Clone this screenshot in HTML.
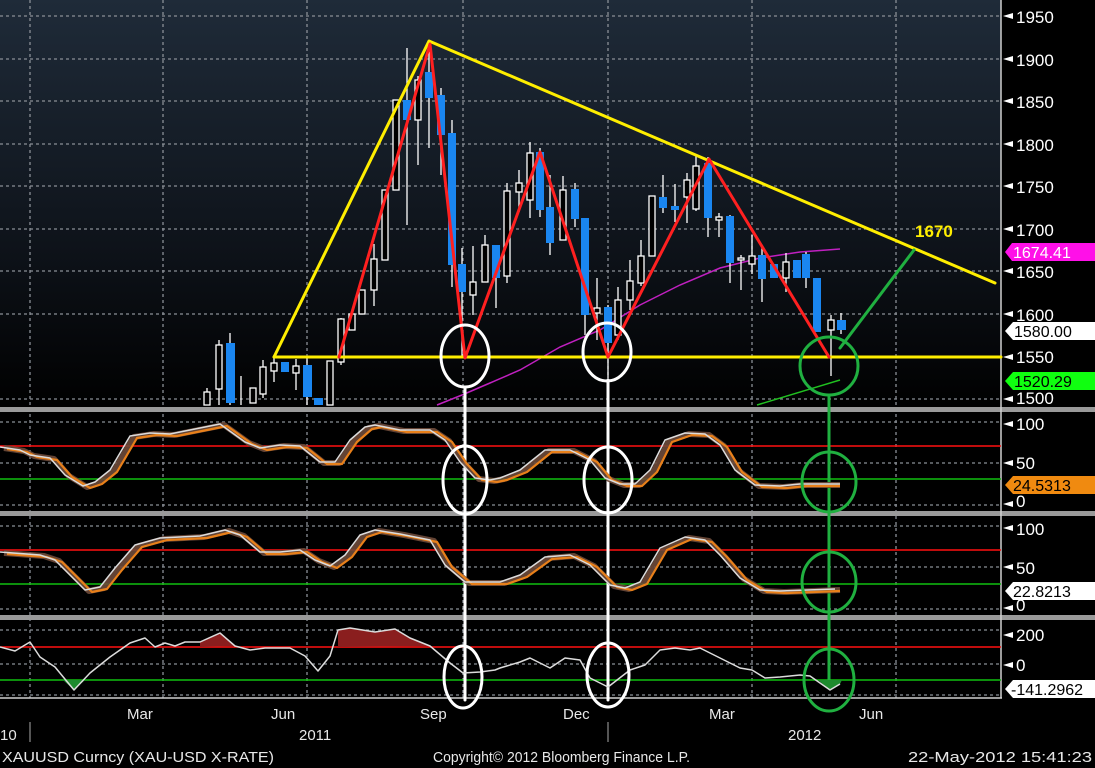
<!DOCTYPE html>
<html><head><meta charset="utf-8"><style>
html,body{margin:0;padding:0;background:#000;width:1095px;height:768px;overflow:hidden}
svg{display:block}
text{font-family:"Liberation Sans",sans-serif}
</style></head><body>
<svg width="1095" height="768" viewBox="0 0 1095 768" xmlns="http://www.w3.org/2000/svg">
<defs>
<linearGradient id="bg" x1="0" y1="0" x2="0" y2="1">
<stop offset="0" stop-color="#1f2b39"/><stop offset="0.6" stop-color="#0e131a"/><stop offset="1" stop-color="#000"/>
</linearGradient>
</defs>
<rect width="1095" height="768" fill="#000"/>
<rect x="0" y="0" width="1001" height="409" fill="url(#bg)"/>
<g stroke="#8a8f96" stroke-width="1.3" stroke-dasharray="3,3">
<line x1="0" y1="16" x2="1001" y2="16"/><line x1="0" y1="59" x2="1001" y2="59"/><line x1="0" y1="101" x2="1001" y2="101"/>
<line x1="0" y1="144" x2="1001" y2="144"/><line x1="0" y1="186" x2="1001" y2="186"/><line x1="0" y1="229" x2="1001" y2="229"/>
<line x1="0" y1="271" x2="1001" y2="271"/><line x1="0" y1="314" x2="1001" y2="314"/><line x1="0" y1="399" x2="1001" y2="399"/>
<line x1="0" y1="422" x2="1001" y2="422"/><line x1="0" y1="463" x2="1001" y2="463"/><line x1="0" y1="505" x2="1001" y2="505"/>
<line x1="0" y1="526" x2="1001" y2="526"/><line x1="0" y1="567" x2="1001" y2="567"/><line x1="0" y1="609" x2="1001" y2="609"/>
<line x1="0" y1="630" x2="1001" y2="630"/><line x1="0" y1="664" x2="1001" y2="664"/><line x1="0" y1="695" x2="1001" y2="695"/>
<line x1="30" y1="0" x2="30" y2="698"/><line x1="163" y1="0" x2="163" y2="698"/><line x1="307" y1="0" x2="307" y2="698"/>
<line x1="463" y1="0" x2="463" y2="698"/><line x1="608" y1="0" x2="608" y2="698"/><line x1="752" y1="0" x2="752" y2="698"/><line x1="896" y1="0" x2="896" y2="698"/>
</g>
<rect x="0" y="407" width="1095" height="5" fill="#9a9a9a"/>
<rect x="0" y="511" width="1095" height="5" fill="#9a9a9a"/>
<rect x="0" y="615" width="1095" height="5" fill="#9a9a9a"/>
<line x1="0" y1="698" x2="1002" y2="698" stroke="#cfcfcf" stroke-width="1.5"/>
<line x1="1001" y1="0" x2="1001" y2="698" stroke="#cfcfcf" stroke-width="1.5"/>
<g stroke-width="1.5">
<line x1="0" y1="446" x2="1001" y2="446" stroke="#ff1010"/><line x1="0" y1="479" x2="1001" y2="479" stroke="#10c010"/>
<line x1="0" y1="550" x2="1001" y2="550" stroke="#ff1010"/><line x1="0" y1="584" x2="1001" y2="584" stroke="#10c010"/>
<line x1="0" y1="647" x2="1001" y2="647" stroke="#ff1010"/><line x1="0" y1="680" x2="1001" y2="680" stroke="#10c010"/>
</g>
<polyline fill="none" stroke="#c020c0" stroke-width="1.5" points="437,405 462,395 490,383 520,370 560,347 600,330 640,305 680,285 720,268 760,258 800,252 840,249"/>
<line x1="757" y1="405" x2="840" y2="380" stroke="#20c020" stroke-width="1.5"/>
<g stroke="#fff" stroke-width="1.3">
<line x1="207" y1="388" x2="207" y2="405"/><line x1="219" y1="340" x2="219" y2="405"/><line x1="230" y1="333" x2="230" y2="405"/>
<line x1="241" y1="376" x2="241" y2="405"/><line x1="263" y1="360" x2="263" y2="398"/><line x1="274" y1="355" x2="274" y2="382"/>
<line x1="296" y1="359" x2="296" y2="390"/><line x1="307" y1="358" x2="307" y2="405"/><line x1="341" y1="318" x2="341" y2="365"/>
<line x1="374" y1="244" x2="374" y2="306"/><line x1="407" y1="48" x2="407" y2="225"/><line x1="418" y1="76" x2="418" y2="165"/>
<line x1="429" y1="40" x2="429" y2="148"/><line x1="441" y1="88" x2="441" y2="175"/><line x1="452" y1="120" x2="452" y2="287"/>
<line x1="462" y1="248" x2="462" y2="358"/><line x1="473" y1="246" x2="473" y2="315"/><line x1="485" y1="235" x2="485" y2="282"/>
<line x1="496" y1="245" x2="496" y2="308"/><line x1="507" y1="183" x2="507" y2="283"/><line x1="519" y1="170" x2="519" y2="212"/>
<line x1="530" y1="142" x2="530" y2="218"/><line x1="540" y1="148" x2="540" y2="217"/><line x1="550" y1="175" x2="550" y2="255"/>
<line x1="563" y1="176" x2="563" y2="240"/><line x1="575" y1="183" x2="575" y2="227"/><line x1="585" y1="218" x2="585" y2="335"/>
<line x1="597" y1="278" x2="597" y2="340"/><line x1="608" y1="305" x2="608" y2="378"/><line x1="618" y1="287" x2="618" y2="340"/>
<line x1="630" y1="260" x2="630" y2="310"/><line x1="641" y1="240" x2="641" y2="286"/><line x1="663" y1="175" x2="663" y2="213"/>
<line x1="675" y1="184" x2="675" y2="222"/><line x1="687" y1="173" x2="687" y2="223"/><line x1="696" y1="156" x2="696" y2="211"/>
<line x1="708" y1="157" x2="708" y2="237"/><line x1="719" y1="213" x2="719" y2="237"/><line x1="730" y1="215" x2="730" y2="283"/>
<line x1="741" y1="255" x2="741" y2="290"/><line x1="752" y1="235" x2="752" y2="274"/><line x1="762" y1="245" x2="762" y2="302"/>
<line x1="786" y1="253" x2="786" y2="292"/><line x1="806" y1="252" x2="806" y2="288"/><line x1="831" y1="315" x2="831" y2="376"/>
<line x1="841" y1="313" x2="841" y2="334"/>
</g>
<g fill="#000" stroke="#fff" stroke-width="1.3">
<rect x="204" y="392" width="6" height="13"/><rect x="216" y="345" width="6" height="44"/><rect x="250" y="388" width="6" height="15"/>
<rect x="260" y="367" width="6" height="27"/><rect x="271" y="363" width="6" height="8"/><rect x="293" y="366" width="6" height="7"/>
<rect x="327" y="361" width="6" height="44"/><rect x="338" y="319" width="6" height="43"/><rect x="349" y="314" width="6" height="16"/>
<rect x="359" y="290" width="6" height="24"/><rect x="371" y="259" width="6" height="31"/><rect x="382" y="190" width="6" height="70"/>
<rect x="393" y="100" width="6" height="90"/><rect x="415" y="80" width="6" height="40"/><rect x="470" y="282" width="6" height="13"/>
<rect x="482" y="245" width="6" height="37"/><rect x="504" y="191" width="6" height="85"/><rect x="516" y="183" width="6" height="9"/>
<rect x="527" y="153" width="6" height="47"/><rect x="560" y="190" width="6" height="50"/><rect x="594" y="308" width="6" height="5"/>
<rect x="615" y="300" width="6" height="35"/><rect x="627" y="281" width="6" height="19"/><rect x="638" y="256" width="6" height="27"/>
<rect x="649" y="196" width="6" height="60"/><rect x="684" y="180" width="6" height="17"/><rect x="693" y="166" width="6" height="43"/>
<rect x="716" y="217" width="6" height="3"/><rect x="738" y="258" width="6" height="2"/><rect x="749" y="256" width="6" height="8"/>
<rect x="783" y="262" width="6" height="16"/><rect x="828" y="320" width="6" height="10"/>
</g>
<g fill="#1a86f0">
<rect x="226" y="343" width="9" height="60"/><rect x="281" y="362" width="8" height="10"/><rect x="303" y="365" width="9" height="32"/>
<rect x="314" y="398" width="9" height="7"/><rect x="403" y="100" width="8" height="20"/><rect x="425" y="72" width="8" height="26"/>
<rect x="437" y="95" width="8" height="40"/><rect x="448" y="133" width="8" height="132"/><rect x="458" y="264" width="8" height="28"/>
<rect x="492" y="245" width="8" height="33"/><rect x="536" y="152" width="8" height="58"/><rect x="546" y="207" width="8" height="36"/>
<rect x="571" y="189" width="8" height="30"/><rect x="581" y="218" width="8" height="97"/><rect x="604" y="307" width="8" height="36"/>
<rect x="659" y="197" width="8" height="11"/><rect x="671" y="206" width="8" height="4"/><rect x="704" y="163" width="8" height="55"/>
<rect x="726" y="216" width="8" height="47"/><rect x="758" y="255" width="8" height="24"/><rect x="770" y="264" width="8" height="14"/>
<rect x="793" y="260" width="8" height="18"/><rect x="802" y="254" width="8" height="24"/><rect x="813" y="278" width="8" height="54"/>
<rect x="837" y="320" width="9" height="10"/>
</g>
<g fill="none" stroke-linecap="round" stroke-linejoin="round">
<polyline points="274,357 429,41 995,283" stroke="#ffee00" stroke-width="3"/>
<line x1="274" y1="357" x2="1001" y2="357" stroke="#ffee00" stroke-width="3"/>
<polyline points="339,357 430,44 465,358 540,152 608,357 709,159 829,357" stroke="#ff2020" stroke-width="3"/>
<line x1="840" y1="348" x2="914" y2="250" stroke="#20b040" stroke-width="3"/>
<line x1="465" y1="387" x2="465" y2="700" stroke="#fff" stroke-width="3"/>
<line x1="608" y1="380" x2="608" y2="700" stroke="#fff" stroke-width="3"/>
<line x1="829" y1="395" x2="829" y2="680" stroke="#20b040" stroke-width="3"/>
</g>
<text x="915" y="237" fill="#ffee00" font-size="17" font-weight="bold">1670</text>
<g fill="none" stroke-linejoin="round">
<g transform="translate(4,1)" stroke="#6e4a3a" stroke-width="6" opacity="0.9">
<polyline points="0,447 20,450 30,455 50,458 65,475 83,486 95,482 110,470 130,436 150,433 170,434 200,428 220,424 245,442 260,448 280,445 300,446 320,462 335,462 350,440 365,427 375,425 400,430 430,430 445,440 460,462 475,478 490,480 500,478 520,470 545,450 570,450 590,460 605,478 620,484 635,484 650,470 665,440 685,433 705,434 720,445 735,470 755,485 780,486 800,484 836,484"/>
<polyline points="0,552 40,555 55,560 70,575 85,590 100,587 115,568 135,545 160,538 200,536 225,530 240,535 260,552 280,552 300,550 315,560 330,566 345,555 360,535 375,530 400,534 430,540 445,565 465,582 490,582 500,582 520,575 545,557 570,555 590,565 610,585 625,588 640,582 660,548 685,537 705,540 720,555 740,578 760,590 780,591 836,589"/>
</g>
<g transform="translate(7,2)" stroke="#e8801a" stroke-width="2.2">
<polyline points="0,447 20,450 30,455 50,458 65,475 83,486 95,482 110,470 130,436 150,433 170,434 200,428 220,424 245,442 260,448 280,445 300,446 320,462 335,462 350,440 365,427 375,425 400,430 430,430 445,440 460,462 475,478 490,480 500,478 520,470 545,450 570,450 590,460 605,478 620,484 635,484 650,470 665,440 685,433 705,434 720,445 735,470 755,485 780,486 800,484 833,484"/>
<polyline points="0,552 40,555 55,560 70,575 85,590 100,587 115,568 135,545 160,538 200,536 225,530 240,535 260,552 280,552 300,550 315,560 330,566 345,555 360,535 375,530 400,534 430,540 445,565 465,582 490,582 500,582 520,575 545,557 570,555 590,565 610,585 625,588 640,582 660,548 685,537 705,540 720,555 740,578 760,590 780,591 833,589"/>
</g>
<g stroke="#dcdcdc" stroke-width="1.5">
<polyline points="0,447 20,450 30,455 50,458 65,475 83,486 95,482 110,470 130,436 150,433 170,434 200,428 220,424 245,442 260,448 280,445 300,446 320,462 335,462 350,440 365,427 375,425 400,430 430,430 445,440 460,462 475,478 490,480 500,478 520,470 545,450 570,450 590,460 605,478 620,484 635,484 650,470 665,440 685,433 705,434 720,445 735,470 755,485 780,486 800,484 840,484"/>
<polyline points="0,552 40,555 55,560 70,575 85,590 100,587 115,568 135,545 160,538 200,536 225,530 240,535 260,552 280,552 300,550 315,560 330,566 345,555 360,535 375,530 400,534 430,540 445,565 465,582 490,582 500,582 520,575 545,557 570,555 590,565 610,585 625,588 640,582 660,548 685,537 705,540 720,555 740,578 760,590 780,591 835,589"/>
</g>
<polygon points="338,647 338,630 350,628 375,632 395,629 410,638 430,646" fill="#8a1e1e" stroke="none"/>
<polygon points="200,647 200,642 220,633 235,646" fill="#8a1e1e" stroke="none"/>
<polygon points="63,680 74,690 85,680" fill="#1e8a2e" stroke="none"/>
<polygon points="818,680 830,690 840,684 842,680" fill="#1e8a2e" stroke="none"/>
<polyline stroke="#dcdcdc" stroke-width="1.5" points="0,647 15,651 30,642 40,657 55,667 74,690 90,673 110,657 130,643 145,638 155,647 165,643 175,646 185,642 200,642 220,633 235,646 250,650 265,648 290,648 305,656 318,671 330,656 338,630 350,628 375,632 395,629 410,638 430,646 450,663 463,673 480,672 495,670 500,668 520,662 530,658 550,668 565,658 580,660 590,678 608,687 630,670 645,665 660,650 675,648 690,650 700,648 720,658 740,668 752,670 765,678 780,677 800,675 810,676 820,683 830,690 840,684"/>
</g>
<g fill="none" stroke-width="3">
<ellipse cx="465" cy="356" rx="24" ry="31" stroke="#fff"/>
<ellipse cx="607" cy="352" rx="24" ry="29" stroke="#fff"/>
<ellipse cx="829" cy="366" rx="29" ry="29" stroke="#20b040"/>
<ellipse cx="465" cy="480" rx="22" ry="34" stroke="#fff"/>
<ellipse cx="608" cy="480" rx="24" ry="33" stroke="#fff"/>
<ellipse cx="829" cy="482" rx="27" ry="30" stroke="#20b040"/>
<ellipse cx="829" cy="582" rx="27" ry="30" stroke="#20b040"/>
<ellipse cx="463" cy="677" rx="19" ry="31" stroke="#fff"/>
<ellipse cx="608" cy="675" rx="21" ry="32" stroke="#fff"/>
<ellipse cx="829" cy="680" rx="25" ry="31" stroke="#20b040"/>
</g>
<g fill="#fff" font-size="17" stroke="none">
<text x="1016" y="23">1950</text><text x="1016" y="66">1900</text><text x="1016" y="108">1850</text>
<text x="1016" y="151">1800</text><text x="1016" y="193">1750</text><text x="1016" y="236">1700</text>
<text x="1016" y="278">1650</text><text x="1016" y="321">1600</text><text x="1016" y="363">1550</text>
<text x="1016" y="404">1500</text>
<text x="1016" y="430">100</text><text x="1016" y="469">50</text><text x="1016" y="507">0</text>
<text x="1016" y="535">100</text><text x="1016" y="574">50</text><text x="1016" y="611">0</text>
<text x="1016" y="641">200</text><text x="1016" y="671">0</text>
</g>
<g fill="#fff">
<polygon points="1003,16 1013,13 1013,19"/><polygon points="1003,59 1013,56 1013,62"/><polygon points="1003,101 1013,98 1013,104"/>
<polygon points="1003,144 1013,141 1013,147"/><polygon points="1003,186 1013,183 1013,189"/><polygon points="1003,229 1013,226 1013,232"/>
<polygon points="1003,271 1013,268 1013,274"/><polygon points="1003,314 1013,311 1013,317"/><polygon points="1003,357 1013,354 1013,360"/>
<polygon points="1003,399 1013,396 1013,402"/>
<polygon points="1003,424 1013,421 1013,427"/><polygon points="1003,463 1013,460 1013,466"/><polygon points="1003,504 1013,501 1013,507"/>
<polygon points="1003,528 1013,525 1013,531"/><polygon points="1003,567 1013,564 1013,570"/><polygon points="1003,608 1013,605 1013,611"/>
<polygon points="1003,635 1013,632 1013,638"/><polygon points="1003,665 1013,662 1013,668"/>
</g>
<polygon points="1005,252 1012,243 1095,243 1095,261 1012,261" fill="#ff10e8"/>
<text x="1013" y="258" fill="#fff" font-size="16">1674.41</text>
<polygon points="1005,331 1013,322 1095,322 1095,340 1013,340" fill="#fff"/>
<text x="1014" y="337" fill="#000" font-size="16">1580.00</text>
<polygon points="1005,381 1013,372 1095,372 1095,390 1013,390" fill="#10ff10"/>
<text x="1014" y="387" fill="#000" font-size="16">1520.29</text>
<polygon points="1005,485 1013,476 1095,476 1095,494 1013,494" fill="#f08a10"/>
<text x="1013" y="491" fill="#000" font-size="16">24.5313</text>
<polygon points="1005,591 1013,582 1095,582 1095,600 1013,600" fill="#fff"/>
<text x="1013" y="597" fill="#000" font-size="16">22.8213</text>
<polygon points="1005,689 1013,680 1095,680 1095,698 1013,698" fill="#fff"/>
<text x="1011" y="695" fill="#000" font-size="16">-141.2962</text>
<g fill="#e8e8e8" font-size="15">
<text x="127" y="719">Mar</text><text x="271" y="719">Jun</text><text x="420" y="719">Sep</text>
<text x="563" y="719">Dec</text><text x="709" y="719">Mar</text><text x="859" y="719">Jun</text>
<text x="0" y="740">10</text><text x="299" y="740">2011</text><text x="788" y="740">2012</text>
<text x="2" y="762" textLength="272" lengthAdjust="spacingAndGlyphs">XAUUSD Curncy (XAU-USD X-RATE)</text>
<text x="433" y="762" textLength="257" lengthAdjust="spacingAndGlyphs">Copyright© 2012 Bloomberg Finance L.P.</text>
<text x="908" y="762" textLength="184" lengthAdjust="spacingAndGlyphs">22-May-2012 15:41:23</text>
</g>
<line x1="30" y1="722" x2="30" y2="742" stroke="#aaa"/><line x1="608" y1="722" x2="608" y2="742" stroke="#aaa"/>
</svg>
</body></html>
